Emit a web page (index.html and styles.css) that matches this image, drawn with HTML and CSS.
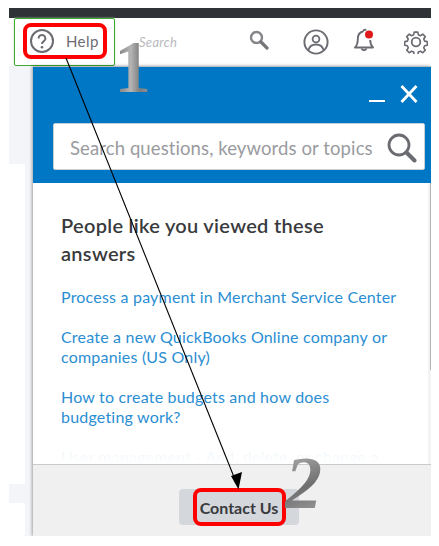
FILE: index.html
```html
<!DOCTYPE html>
<html lang="en">

<head>
  <meta charset="UTF-8">
  <title>Help</title>
  <link rel="stylesheet" href="styles.css">
</head>

<body>
  <div class="shot">
    <div class="topbar"></div>

    <!-- header row -->
    <div class="header">
      <div class="help-cell">
        <div class="help-mark">
          <svg class="help-icon" width="24" height="24" viewBox="0 0 24 24">
            <circle cx="12" cy="12" r="11" fill="none" stroke="#6b6c72" stroke-width="2" />
            <path d="M8.6 9.4a3.4 3.4 0 1 1 5.3 2.8c-1.2.8-1.9 1.4-1.9 2.9" fill="none" stroke="#6b6c72" stroke-width="2" />
            <circle cx="12" cy="18.2" r="1.3" fill="#6b6c72" />
          </svg>
          <span class="help-text">Help</span>
        </div>
      </div>
      <span class="header-search">Search</span>
      <svg class="icon-search" width="20" height="20" viewBox="0 0 20 20">
        <circle cx="7.5" cy="7.5" r="5.5" fill="none" stroke="#85868a" stroke-width="2.4" />
        <path d="M12 12l6 6" stroke="#75767a" stroke-width="3.2" stroke-linecap="round" />
      </svg>
      <svg class="icon-user" width="26" height="26" viewBox="0 0 26 26">
        <circle cx="13" cy="13" r="11.6" fill="none" stroke="#6b6c72" stroke-width="1.9" />
        <circle cx="13" cy="10" r="3.4" fill="none" stroke="#6b6c72" stroke-width="1.8" />
        <path d="M5.5 21c1-4 4-5.500 7.500-5.500s6.500 1.500 7.500 5.500" fill="none" stroke="#6b6c72" stroke-width="1.8" />
      </svg>
      <svg class="icon-bell" width="24" height="26" viewBox="0 0 24 26">
        <path d="M10 3.500c-4 1-5.200 4-5.200 7.500 0 4-.8 6.500-2.800 8.500h18c-2-2-2.800-4.500-2.800-7.500M10 3.500c.3-1.500 2.200-2.500 3-1" fill="none" stroke="#6b6c72" stroke-width="1.9" stroke-linejoin="round" />
        <path d="M8.500 20.500a2.700 2.700 0 0 0 5 0" fill="none" stroke="#6b6c72" stroke-width="1.9" />
        <circle cx="16" cy="6.500" r="4" fill="#e0191d" />
      </svg>
      <svg class="icon-gear" width="24" height="24" viewBox="0 0 24 24">
        <path d="M10 1h4l.6 3 2.300 1 2.600-1.700 2.800 2.800-1.700 2.600 1 2.300 3 .6v4l-3 .6-1 2.300 1.700 2.600-2.800 2.800-2.600-1.700-2.300 1-.6 3h-4l-.6-3-2.300-1-2.600 1.700-2.800-2.800 1.700-2.600-1-2.300-3-.6v-4l3-.6 1-2.300-1.700-2.600 2.800-2.800 2.600 1.700 2.300-1z" transform="translate(1.200 1.200) scale(.9)" fill="none" stroke="#6b6c72" stroke-width="1.800" stroke-linejoin="round" />
        <circle cx="12" cy="12" r="4.300" fill="none" stroke="#6b6c72" stroke-width="1.800" />
      </svg>
    </div>

    <div class="main">
      <div class="side">
        <div class="side-card"></div>
        <div class="side-card side-card-last"></div>
      </div>

      <div class="panel">
        <div class="panel-head">
          <div class="panel-controls">
            <svg width="16" height="18" viewBox="0 0 16 18">
              <path d="M0 16h16" stroke="#fff" stroke-width="2" />
            </svg>
            <svg width="18" height="18" viewBox="0 0 18 18">
              <path d="M1.500 1l15 16M16.500 1l-15 16" stroke="#fff" stroke-width="2.800" />
            </svg>
          </div>
          <div class="search-box">
            <span class="search-text">Search questions, keywords or topics</span>
            <svg width="30" height="30" viewBox="0 0 30 30">
              <circle cx="12" cy="12" r="10" fill="none" stroke="#6b6c72" stroke-width="2.800" />
              <path d="M19.500 19.500l8 8" stroke="#6b6c72" stroke-width="4" stroke-linecap="round" />
            </svg>
          </div>
        </div>

        <div class="panel-body">
          <div class="answers">
            <h2>People like you viewed these answers</h2>
            <a>Process a payment in Merchant Service Center</a>
            <a>Create a new QuickBooks Online company or companies (US Only)</a>
            <a>How to create budgets and how does budgeting work?</a>
            <a>User management - Add, delete, or change a user</a>
            <div class="fade"></div>
          </div>
          <div class="scroll-track">
            <div class="scroll-thumb"></div>
          </div>
        </div>

        <div class="panel-foot">
          <div class="contact-btn">
            <span class="contact-mark">Contact Us</span>
          </div>
        </div>
      </div>
    </div>

    <!-- annotations drawn over the screenshot -->
    <svg class="arrow" width="422" height="528" viewBox="0 0 422 528">
      <path d="M57 50L227 474" stroke="#000" stroke-width="1.100" />
      <path d="M229.500 481.500L222 468l11-4z" fill="#000" />
    </svg>
    <span class="digit digit-one">1</span>
    <span class="digit digit-two">2</span>
  </div>
</body>

</html>
```

FILE: styles.css
```css
html, body {
  margin: 0;
  background: #fff;
}
body {
  padding: 8px 8px 10px 9px;
  font-family: Lato, "Open Sans", sans-serif;
}
.shot {
  position: relative;
  width: 422px;
  height: 528px;
  display: flex;
  flex-direction: column;
  overflow: hidden;
}
.topbar {
  height: 10px;
  background: #2f3337;
}

/* header */
.header {
  height: 48px;
  display: flex;
  align-items: center;
  background: #fff;
}
.help-cell {
  margin-left: 5px;
  width: 101px;
  height: 48px;
  box-sizing: border-box;
  border: 1px solid #3aab2e;
  border-radius: 2px;
  box-shadow: 0 0 2px #bfe5b8;
  padding: 4px 7px 6px 8px;
}
.help-mark {
  height: 100%;
  box-sizing: border-box;
  border: 4px solid #f00;
  border-radius: 8px;
  display: flex;
  align-items: center;
  padding-left: 3px;
}
.help-icon {
  margin-right: 12px;
}
.help-text {
  font-size: 15px;
  color: #6b6c72;
  letter-spacing: .4px;
}
.header-search {
  margin-left: 24px;
  width: 110px;
  font-size: 13px;
  font-style: italic;
  color: #b9babd;
  letter-spacing: .3px;
  margin-top: -1px;
}
.icon-search { margin-top: -4px; }
.icon-user { margin-left: 34px; }
.icon-bell { margin-left: 24px; margin-top: -2px; }
.icon-gear { margin-left: 27px; }

.main {
  flex: 1;
  display: flex;
  min-height: 0;
}

/* strip left of the panel */
.side {
  width: 24px;
  background: #f4f5f8;
  padding-top: 98px;
  box-sizing: border-box;
  display: flex;
  flex-direction: column;
  gap: 19px;
}
.side-card {
  width: 16px;
  height: 320px;
  background: #fff;
  border-top-right-radius: 3px;
  border-bottom-right-radius: 3px;
}
.side-card-last {
  flex: 1;
  height: auto;
}

/* help panel */
.panel {
  flex: 1;
  display: flex;
  flex-direction: column;
  border-top: 1px solid #b9bcc0;
  box-shadow: -1px 0 3px rgba(0, 0, 0, .35);
  min-width: 0;
}
.panel-head {
  height: 116px;
  box-sizing: border-box;
  background: #0077c5;
  padding: 18px 6px 0 20px;
}
.panel-controls {
  display: flex;
  justify-content: flex-end;
  gap: 15px;
  padding-right: 7px;
  margin-bottom: 20px;
}
.panel-controls svg {
  display: block;
}
.search-box {
  height: 47px;
  box-sizing: border-box;
  background: #fff;
  border: 1px solid #c8ced6;
  border-radius: 2px;
  display: flex;
  align-items: center;
  justify-content: space-between;
  padding: 2px 7px 0 16px;
}
.search-text {
  font-size: 18.500px;
  letter-spacing: .1px;
  color: #9a9ba0;
  white-space: nowrap;
}

.panel-body {
  flex: 1;
  display: flex;
  min-height: 0;
  background: #fff;
}
.answers {
  position: relative;
  flex: 1;
  overflow: hidden;
  padding: 0 28px 0 28px;
}
.answers h2 {
  margin: 28px 0 20px;
  max-width: 290px;
  font-size: 20px;
  line-height: 28px;
  letter-spacing: .3px;
  font-weight: 600;
  color: #393a3d;
}
.answers a {
  display: block;
  margin-bottom: 20px;
  font-size: 16px;
  line-height: 20px;
  letter-spacing: .2px;
  color: #2b8ed3;
}
.fade {
  position: absolute;
  left: 0;
  right: 0;
  bottom: 0;
  height: 24px;
  background: linear-gradient(rgba(255, 255, 255, .82), rgba(255, 255, 255, .92) 50%, #fff);
}
.scroll-track {
  width: 3px;
  background: #f3f3f3;
}
.scroll-thumb {
  margin-left: 2px;
  width: 1px;
  height: 187px;
  background: #b5b5b5;
}

.panel-foot {
  height: 72px;
  box-sizing: border-box;
  background: #f0f0f1;
  border-top: 1px solid #c9cacc;
  padding: 24px 0 0 146px;
}
.contact-btn {
  width: 120px;
  height: 36px;
  background: #d4d7dc;
  border-radius: 4px;
  display: flex;
  justify-content: center;
  align-items: center;
}
.contact-mark {
  box-sizing: border-box;
  width: 93px;
  height: 38px;
  border: 4px solid #f00;
  border-radius: 8px;
  display: flex;
  align-items: center;
  justify-content: center;
  font-size: 16px;
  font-weight: 700;
  color: #393a3d;
  white-space: nowrap;
}

/* annotations */
.arrow {
  position: absolute;
  left: 0;
  top: 0;
  pointer-events: none;
}
.digit {
  position: absolute;
  font-family: "Liberation Serif", serif;
  font-size: 74px;
  line-height: 74px;
  color: transparent;
  -webkit-background-clip: text;
  background-clip: text;
}
.digit-one {
  left: 105px;
  top: 22px;
  font-weight: 700;
  background-image: linear-gradient(90deg, #6e6e6e, #b5b5b5 45%, #7d7d7d 70%, #9a9a9a);
}
.digit-two {
  left: 276px;
  top: 438px;
  font-weight: 700;
  font-style: italic;
  background-image: linear-gradient(160deg, #b9b9b9, #6f6f6f 55%, #a5a5a5);
}
```
